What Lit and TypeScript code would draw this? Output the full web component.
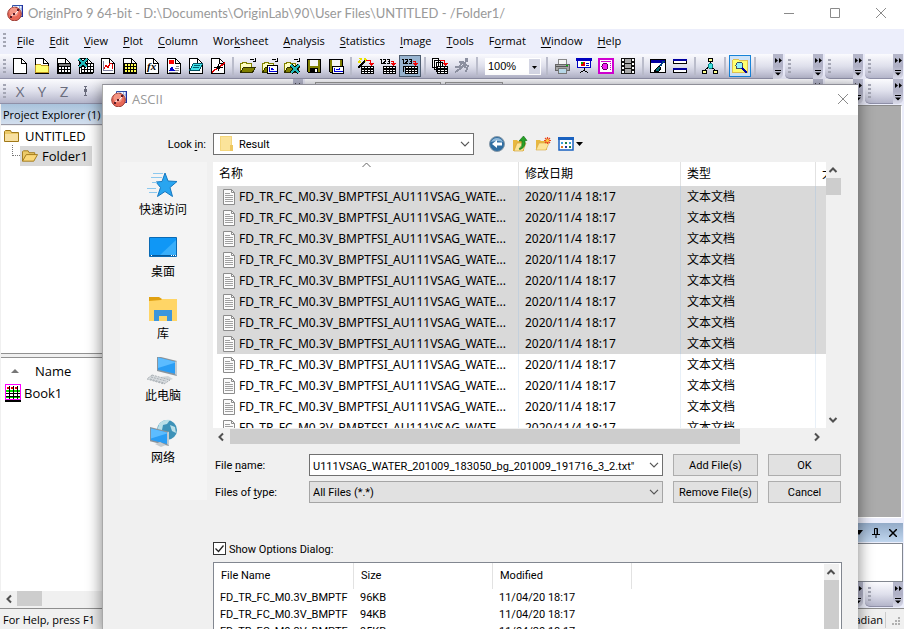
import { LitElement, html, svg, css } from "lit";
import { customElement, query } from "lit/decorators.js";
import { classMap } from "lit/directives/class-map.js";

const page = svg`<path d="M1.5.5h8l5 5v10h-13z" fill="#fff" stroke="#000"/><path d="M9.5.5v5h5" fill="none" stroke="#000"/>`;
const grid = (x: number, y: number, fill: string) => svg`
  <rect x=${x + 0.5} y=${y + 0.5} width="12" height="9" fill=${fill} stroke="#000"/>
  <path d="M${x + 3.5} ${y}v10M${x + 6.5} ${y}v10M${x + 9.5} ${y}v10M${x} ${y + 3.5}h13M${x} ${y + 6.5}h13" stroke="#000" fill="none"/>`;
const folder = svg`
  <path d="M.5 14.500V5.500h1.500l1-1h3l1 1h4v3" fill="#ffffc0" stroke="#808000"/>
  <path d="M.5 14.500l3-5h12l-3 5z" fill="#808000" stroke="#303000"/>
  <path d="M9.500 2.500c1-2 4-2 5 0M15.500 0v3.500h-3" fill="none" stroke="#000"/>`;
const floppy = svg`<path d="M1.500 1.500h13v13h-12l-1-1z" fill="#808000" stroke="#000"/><rect x="4" y="2" width="8" height="6" fill="#f4f4f4"/><path d="M4 10h8v5H4z" fill="#000"/><path d="M9 11h2v3H9z" fill="#fff"/>`;
const smallGrid = (x: number, y: number) => svg`
  <path d="M${x} ${y}h13v8h-13z" fill="#000"/>
  ${[0, 1, 2].map((r) => [0, 1, 2, 3].map((c) => svg`<path d="M${x + 1 + c * 3} ${y + 1 + r * 2 + (r ? 1 : 0)}h2v1h-2z" fill="#fff"/>`))}`;
const redArrow = svg`<path d="M10 5h6l-3 3z" fill="#f00000"/><path d="M8 2.500h4.500v3" stroke="#f00000" stroke-width="1.500" fill="none"/>`;
const excelX = (x: number, y: number) => svg`<path d="M${x + 1} ${y + 1}l8 8M${x + 9} ${y + 1}l-8 8" stroke="#000" stroke-width="4"/><path d="M${x + 1} ${y + 1}l8 8M${x + 9} ${y + 1}l-8 8" stroke="#20b8b8" stroke-width="2"/>`;
const digits = svg`<path d="M0 1.500h1.500v4M3 1.500h2.500v1.500l-2 2h2.500M7 1.500h2.500v4H7M7.500 3.500h2" stroke="#000" fill="none"/>`;

const icons: Record<string, unknown> = {
  "New Project": page,
  "New Folder": svg`${page}<path d="M1.500 14.500v-7l1-1h4l1 1h6l1 1v6z" fill="#ffff70" stroke="#c09820"/>`,
  "New Workbook": svg`${page}${grid(2, 5, "#fff")}<path d="M3 6h11v2H3z" fill="#808080"/>`,
  "New Excel": svg`${page}${grid(3, 5, "#fff")}${excelX(0, 0)}`,
  "New Graph": svg`${page}<path d="M3.500 3v9.500H13" stroke="#8080a0" fill="none"/><path d="M4 11l2-4 2 3 2-5 2 1v5" stroke="#e00000" fill="none"/>`,
  "New Matrix": svg`${page}${grid(2, 5, "#ffff50")}`,
  "New Function": svg`${page}<text x="3" y="12" class="fx">fx</text>`,
  "New Layout": svg`${page}<path d="M3 2h5v4H3z" fill="#f00"/><path d="M3 13l2-4 1-1 3 5z" fill="#0000d0"/><path d="M10 8h3M9 10h4M9 12.500h4M3 14h9" stroke="#888"/>`,
  "New Notes": svg`${page}<path d="M5.500 5.500h9l-3 7h-10z" fill="#40e0e8" stroke="#005060"/><path d="M6 7.500h6M5 9.500h6" stroke="#006070"/>`,
  "New 2D Plot": svg`${page}<path d="M8.500 6v7M4 9.500h9" stroke="#000"/><path d="M2 14L15 5" stroke="#e00000" stroke-width="1.500"/><path d="M7 8h3v3H7z" fill="#000"/>`,
  "Open": folder,
  "Open Template": svg`${folder}<path d="M5.500 7.500h10v8h-10z" fill="#fff" stroke="#000"/><path d="M7.500 9v4.500h7M9 12l1-2 1 2 1-1" stroke="#0000e0" fill="none"/>`,
  "Open Excel": svg`${folder}${excelX(6, 6)}`,
  "Save Project": floppy,
  "Save Template": svg`${floppy}<path d="M4.500 8.500h11v7h-11z" fill="#fff" stroke="#000"/><path d="M6.500 10v3.500h8M8 12l1-1 2 1 1-2" stroke="#0000e0" fill="none"/>`,
  "Import Wizard": svg`<path d="M0 10l7-7" stroke="#000" stroke-width="2"/><path d="M2 0l2 2M7 0v2M0 4l2-1M3 5l-1-1M9 2l-2 1" stroke="#e8e000" stroke-width="1.500"/>${redArrow}${smallGrid(3, 8)}`,
  "Import Single ASCII": svg`${digits}<path d="M11 3.500h2.500v2" stroke="#f00000" fill="none"/><path d="M11 5h5l-2.500 3z" fill="#f00000"/>${smallGrid(3, 8)}`,
  "Import Multiple ASCII": svg`${digits}<path d="M11 3.500h2.500v2" stroke="#f00000" fill="none"/><path d="M11 5h5l-2.500 3z" fill="#f00000"/><path d="M1.500 14v-5.500h2" stroke="#000" fill="none"/>${smallGrid(3, 8)}`,
  "Batch Processing": svg`<path d="M.5.500h6v9h-6zM2.500 2.500h6v9h-6zM4.500 4.500h6v9h-6z" fill="#fff" stroke="#000"/>${redArrow}<path d="M5 8h11v8H5z" fill="#000"/><path d="M6 9h2v1H6zM9 9h3v1H9zM13 9h2v1h-2zM6 12h2v1H6zM9 12h3v1H9zM13 12h2v1h-2zM6 14h2v1H6zM9 14h3v1H9zM13 14h2v1h-2z" fill="#fff"/>`,
  "Recalculate": svg`<g stroke="#8c90a0" fill="none" stroke-width="2"><path d="M12 3l-3 5-3 3-5 3M9 8l4 2-1 4M5 4h4l2 3 4 1M8 5L5 9H1"/></g><circle cx="12.500" cy="2" r="2" fill="#8c90a0"/>`,
  "Print": svg`<path d="M4 6l1-5h7v5" fill="#f4f4f4" stroke="#888"/><path d="M1 6h14v6H1z" fill="#a4a4a4" stroke="#666"/><path d="M2 8h12" stroke="#555"/><path d="M4 10h8v5H4z" fill="#b8d8e8" stroke="#777"/><path d="M12 7h2v1h-2z" fill="#00c000"/>`,
  "Slide Show": svg`<path d="M0 0h16v2.500H0z" fill="#0000c0"/><path d="M1.500 2.500h13v7h-13z" fill="#fff" stroke="#0000c0"/><circle cx="7" cy="6" r="2.500" fill="#e00000"/><path d="M7 6v-2.500a2.500 2.500 0 0 0-2.500 3z" fill="#00a000"/><path d="M10 5h3M10 7h3" stroke="#0000c0"/><path d="M8 10v3M4 14.500l4-2 4 2" stroke="#000" fill="none"/>`,
  "Copy Page": svg`<path d="M1 1h14v14H1z" fill="#fff" stroke="#d000d0" stroke-width="2"/><path d="M3 3.500h10" stroke="#d000d0"/><circle cx="7" cy="8.500" r="3" fill="#f020f0" stroke="#600060"/><path d="M12.500 5v7" stroke="#c000c0" stroke-dasharray="1 1"/>`,
  "Video": svg`<path d="M1 0h14v16H1z" fill="#111"/><path d="M5 1h6v4H5zM5 6h6v4H5zM5 11h6v4H5z" fill="#a8a8a8"/><path d="M3 1v15M13 1v15" stroke="#fff" stroke-width="2" stroke-dasharray="2 2"/>`,
  "Format": svg`<path d="M.5 1.500h15v13H.5z" fill="#fff" stroke="#000"/><path d="M1 2h14v3H1z" fill="#0000a0"/><path d="M14 3l-4 5" stroke="#004080" stroke-width="2"/><path d="M9 8l2 2-2 3-5 1 2-3z" fill="#006c70" stroke="#000"/>`,
  "Duplicate": svg`<path d="M1.500 1.500h13v4h-13zM1.500 10.500h13v4h-13z" fill="#fff" stroke="#000"/><path d="M1 1h14v2H1zM1 10h14v2H1z" fill="#0000a0"/>`,
  "Add Columns": svg`<path d="M8.500 3v5M3 12l5-4 5 4" stroke="#000" fill="none"/><path d="M6.500.500h4v3h-4zM.5 12.500h4v3h-4zM11.500 12.500h4v3h-4z" fill="#ffff90" stroke="#000"/><circle cx="8.500" cy="8" r="2.500" fill="#40e0e0" stroke="#008080"/>`,
  "Project Explorer": svg`<path d="M.5 14.500V2.500l1-1h5l1 1h8v12z" fill="#ffff70" stroke="#e0c050"/><circle cx="7.500" cy="7.500" r="3.500" fill="#90f0ff" stroke="#405060"/><path d="M10 10l5 5" stroke="#0000a0" stroke-width="2.500"/>`,
};

const groups: string[][] = [
  ["New Project", "New Folder", "New Workbook", "New Excel", "New Graph", "New Matrix", "New Function", "New Layout", "New Notes", "New 2D Plot"],
  ["Open", "Open Template", "Open Excel", "Save Project", "Save Template"],
  ["Import Wizard", "Import Single ASCII", "Import Multiple ASCII"],
  ["Batch Processing", "Recalculate"],
];
const groupsAfterZoom: string[][] = [
  ["Print", "Slide Show", "Copy Page", "Video"],
  ["Format", "Duplicate"],
  ["Add Columns"],
  ["Project Explorer"],
];

const menus = ["_File", "_Edit", "_View", "_Plot", "_Column", "Wor_ksheet", "_Analysis", "_Statistics", "_Image", "_Tools", "F_ormat", "_Window", "_Help"];

const mnemonic = (label: string) => {
  const at = label.indexOf("_");
  return html`${label.slice(0, at)}<u>${label[at + 1]}</u>${label.slice(at + 2)}`;
};

const appIcon = svg`<path d="M5.500.500h10v11h-10z" fill="#eef4ff" stroke="#3050a8"/><path d="M9 1v10M12.500 1v10M6 4h10M6 8h10" stroke="#9ab0e0"/><path d="M15.500 0v12" stroke="#2030a0" stroke-width="1.500"/><circle cx="7.500" cy="9" r="6.800" fill="#e86858" stroke="#9c3c34"/><circle cx="7" cy="7" r="4.500" fill="#f8a898" opacity=".7"/><path d="M3.500 12l3-3h2l3-4" stroke="#fff" fill="none"/><path d="M3 11h2v2H3zM6 8h2v2H6zM10 4h2v2h-2z" fill="#5a1c28"/>`;

const chevron = html`<svg class="chevron" viewBox="0 0 10 6" width="10" height="6"><path d="M1 .8l4 4 4-4" fill="none" stroke="#555" stroke-width="1.200"/></svg>`;
const arrow = (rotation: string) => html`<svg class="arrow ${rotation}" viewBox="0 0 10 10" width="10" height="10"><path d="M1.500 7L5 3.500 8.500 7" fill="none" stroke="#505050" stroke-width="2"/></svg>`;
const closeX = html`<svg viewBox="0 0 12 12" width="12" height="12"><path d="M1 1l10 10M11 1L1 11" stroke="#8a8a8a" fill="none"/></svg>`;

const monitor = svg`<path d="M0 0l20 5v15L0 15z" fill="#8a949c"/><path d="M1 1.500l17 4.300v12L1 13.700z" fill="#2a9df4"/><path d="M1 1.500l17 4.300v1L1 12z" fill="#5cbcff"/><path d="M18 5.800l2-.8v15l-2-2z" fill="#c4ccd2"/>`;
const places = [
  { label: "快速访问", art: svg`<path d="M18 2l3 8 9 .5-7 6 2.500 9-7.500-5-7.500 5 3-9-4.500-5.500 6-.5z" fill="#29a5f0" stroke="#1678c0"/><path d="M6 2.500h10M4 6.500h11M0 17.500h9M2 21.500h8M5 11.500h5" stroke="#8cc8ee" fill="none"/>` },
  { label: "桌面", art: svg`<path d="M2.500 4.500h27v19h-27z" fill="#0f97f6" stroke="#0a6ab4"/><path d="M12 23L29 7v16z" fill="#38aefa"/><path d="M3 22.500h26" stroke="#075898"/><path d="M4 22.500h1M24 22.500h1M26 22.500h1M28 22.500h1" stroke="#fff"/>` },
  { label: "库", art: svg`<path d="M2 2h10l3 2v4H2z" fill="#e0a010"/><path d="M2 6l12-1 1-1h15v22H2z" fill="#ffd566"/><path d="M7 26V15h18v11h-5v-5h-8v5z" fill="#3d96dc"/>` },
  { label: "此电脑", art: svg`<g transform="translate(10 -1)">${monitor}</g><path d="M13 20l8-1 5 3-9 3z" fill="#d0d5d8"/><path d="M5 18l18 5-6 4-17-5z" fill="#d8dcdf" stroke="#aab0b4" stroke-dasharray="2 1"/><path d="M4 20l15 4M3 22l14 4" stroke="#a8afb4" stroke-dasharray="2 1"/>` },
  { label: "网络", art: svg`<circle cx="20" cy="11" r="10" fill="#3d92b8"/><path d="M12 5q5-5 11-4l-3 4-4 1-1 5-5 1zM23 6l5 2 1 6-4-2z" fill="#b9dfe8"/><g transform="translate(3 8) scale(.95)">${monitor}</g><path d="M8 25l5-2 6 3-5 2z" fill="#c5cbcf"/>` },
];

const fileRows = Array.from({ length: 12 }, (_, i) => ({
  name: "FD_TR_FC_M0.3V_BMPTFSI_AU111VSAG_WATE...",
  date: "2020/11/4 18:17",
  type: "文本文档",
  selected: i < 8,
}));
const chosen = ["96KB", "94KB", "95KB"].map((size) => ({ name: "FD_TR_FC_M0.3V_BMPTF", size, modified: "11/04/20 18:17" }));

@customElement("app-root")
export class AppRoot extends LitElement {
  @query(".file-name") private fileName!: HTMLInputElement;

  static styles = css`
    :host {
      display: flex; flex-direction: column; position: relative; height: 100vh; overflow: hidden;
      font: 11px/16px "Open Sans", "Noto Sans CJK SC", sans-serif; color: #000; background: #eceefb;
    }
    * { box-sizing: border-box; }
    button, input, select { font: inherit; color: inherit; margin: 0; border-radius: 0; }
    button { padding: 0; border: 0; background: none; }
    svg { display: block; flex: none; }
    .fx { font: italic 700 11px "Liberation Serif", serif; }

    .titlebar { display: flex; align-items: center; height: 29px; flex: none; padding: 0 8px 3px 7px; gap: 5px; background: #fff; color: #999; }
    .titlebar h1, .dialog-title h2 { flex: 1; margin: 0; font-weight: 400; white-space: nowrap; }
    .titlebar h1 { font: 13px/20px Lato, sans-serif; }
    .window-buttons { display: flex; }
    .window-buttons button { width: 46px; height: 24px; display: grid; place-items: center; }
    .window-buttons button:last-child { width: 30px; margin-left: 8px; }

    .menubar { display: flex; align-items: center; height: 25px; flex: none; padding: 0 0 2px 3px; background: #eceefb; }
    .menubar nav { display: flex; margin-left: 11px; gap: 15px; }
    .menubar a { color: #000; text-decoration: none; }
    u { text-underline-offset: 2px; }
    .grip { width: 3px; height: 15px; flex: none; background: repeating-linear-gradient(#a4a6b4 0 2px, transparent 2px 4px); }

    .toolrow { display: flex; height: 25px; flex: none; gap: 2px; padding-right: 1px; background: #e8e9f8; }
    .band { display: flex; height: 25px; min-width: 0; }
    .band.main { flex: 1; }
    .band.small { width: 38px; flex: none; }
    .band.columns { width: 303px; flex: none; }
    .tools { display: flex; align-items: center; flex: 1; min-width: 0; padding-left: 3px; background: linear-gradient(#fbfbfe, #dfe0ec 50%, #b4b5ca); border-bottom: 1px solid #8f90a8; overflow: hidden; }
    .small .tools { border-radius: 0 0 0 5px; }
    .more { display: flex; flex-direction: column; align-items: center; justify-content: space-around; width: 10px; flex: none; background: linear-gradient(#b4b6ca, #b0b1c6 50%, #d8d9e8); border-radius: 0 0 5px 0; }
    .group { display: flex; }
    .first { margin-left: 3px; }
    .tool { width: 22px; height: 22px; display: grid; place-items: center; border: 1px solid transparent; }
    .tool.on { background: #98b4d0; border-color: #4d5c70; }
    .tool.hot { background: #cfe4f8; border-color: #1883d7; }
    .sep { width: 2px; height: 18px; margin: 0 3px; background: #babccb; flex: none; }
    .zoom { position: relative; display: flex; width: 56px; height: 17px; margin: 0 2px 0 4px; }
    .zoom select { width: 56px; height: 17px; padding: 0 0 0 3px; border: 0; appearance: none; background: #fff; font: 11px/16px "Liberation Sans", sans-serif; }
    .zoom svg { position: absolute; right: 0; top: 0; pointer-events: none; }
    .letters { margin-left: 3px; color: #6a6c7c; font-size: 15px; }
    .letters .tool { line-height: 20px; }
    .toolcombo { align-self: flex-start; height: 20px; margin: 3px 0 0 4px; border: 1px solid #999; background: #e4e4ec; flex: none; }
    .toolcombo.wide { width: 126px; }
    .toolcombo.narrow { width: 58px; }

    .workspace { display: flex; flex: 1; min-height: 0; }
    .explorer { display: flex; flex-direction: column; width: 140px; flex: none; background: #f0f0f0; padding-left: 1px; }
    .explorer h2 { height: 21px; flex: none; margin: 0; padding: 0 2px; font: inherit; line-height: 22px; background: linear-gradient(#a9c3dc, #d3dfee); border-bottom: 1px solid #9a9aa6; white-space: nowrap; }
    .tree { height: 227px; flex: none; margin: 1px 0 0; padding: 0 0 0 3px; list-style: none; background: #fff; font-size: 13px; }
    .tree li { display: flex; align-items: center; height: 20px; gap: 5px; }
    .node { display: flex; align-items: center; height: 20px; gap: 4px; padding: 0 4px 0 2px; background: #d9d9d9; }
    .twig { width: 12px; height: 11px; margin: -11px -9px 0 8px; border: 1px dotted #777; border-width: 0 0 1px 1px; flex: none; }
    .splitter { height: 5px; flex: none; border: 1px solid #929292; border-width: 1px 0; background: #f0f0f0; }
    .books { flex: 1; min-height: 0; background: #fff; font-size: 13px; }
    .books-head { display: flex; align-items: center; height: 25px; padding-left: 10px; gap: 16px; }
    .book { display: flex; align-items: center; height: 20px; padding-left: 4px; gap: 3px; }
    .hscroll, .vscroll { display: flex; align-items: center; background: #f0f0f0; flex: none; }
    .hscroll { height: 15px; }
    .vscroll { flex-direction: column; width: 15px; }
    .thumb { background: #cdcdcd; }
    .hscroll .thumb { height: 15px; }
    .vscroll .thumb { width: 15px; }
    .explorer .hscroll { margin-bottom: 2px; }
    .explorer .thumb { width: 25px; margin-left: -1px; }
    .arrow { margin: 3px 4px 3px 3px; }
    .left { transform: rotate(-90deg); } .right { transform: rotate(90deg); } .down { transform: rotate(180deg); }

    .main-area { display: flex; flex-direction: column; flex: 1; min-width: 0; padding-right: 1px; }
    .mdi { flex: 1; background: #ababab; border: 1px solid #8a8a8a; border-right: 1px solid #fff; border-bottom: 1px solid #fff; margin: 1px 1px 5px 0; }
    .dock-title { display: flex; align-items: center; justify-content: flex-end; gap: 9px; height: 19px; flex: none; padding-right: 6px; background: linear-gradient(#93abc8, #c0d6ee); }
    .dock-body { height: 39px; flex: none; margin: 1px 0 0; border: 1px solid #828790; background: #fff; }
    .dock-tools { display: flex; justify-content: flex-end; gap: 2px; height: 26px; }
    .status { display: flex; align-items: center; height: 21px; flex: none; padding: 2px 3px 0; background: #f0f0f0; border-top: 1px solid #8e8e8e; white-space: nowrap; }
    .status .mode { margin-left: auto; padding-right: 2px; border-right: 1px solid #ccc; }
    .status svg { margin: 3px 0 0 6px; }

    .dialog {
      position: absolute; left: 102px; right: 46px; top: 84px; bottom: 0; display: flex; flex-direction: column;
      background: #f0f0f0; border-top: 1px solid #8f8f98; border-left: 1px solid #a8a8a8; box-shadow: 0 4px 14px 1px rgba(0, 0, 0, 0.45);
      font: 11px/16px Roboto, "Noto Sans CJK SC", sans-serif;
    }
    .dialog-title { display: flex; align-items: center; gap: 5px; height: 30px; flex: none; padding: 0 9px 2px 8px; background: #fff; color: #999; font-family: "Open Sans", sans-serif; }
    .dialog-title h2 { font-size: 13px; }
    .look { display: flex; align-items: center; height: 22px; margin: 18px 17px 7px; flex: none; }
    .look label { width: 93px; padding: 2px 7px 0 0; text-align: right; }
    .combo { position: relative; display: flex; }
    .combo select, .combo input { width: 100%; height: 22px; border: 1px solid #707070; background: #fff; appearance: none; outline: 0; padding: 2px 22px 0 3px; }
    .combo .chevron { position: absolute; right: 4px; top: 8px; pointer-events: none; }
    .combo.folder { width: 261px; }
    .combo.folder select { padding-left: 25px; }
    .combo .folder-icon { position: absolute; left: 7px; top: 3px; pointer-events: none; }
    .combo.type select { background: #e1e1e1; border-color: #a5a5a5; }
    .look-tools { display: flex; margin-left: 15px; gap: 7px; }
    .browse { display: flex; padding: 0 17px; gap: 6px; }
    .places { display: flex; flex-direction: column; width: 87px; height: 338px; flex: none; padding-top: 9px; background: #f4f4f4; font-size: 12px; }
    .places button { display: flex; flex-direction: column; align-items: center; height: 62px; gap: 2px; padding-right: 1px; line-height: 18px; }
    .pane { flex: 1; min-width: 0; }
    .files { display: flex; height: 266px; }
    .clip { flex: 1; min-width: 0; overflow: hidden; background: #fff; font: 12px/16px "Noto Sans", "Noto Sans CJK SC", sans-serif; position: relative; }
    .sort { position: absolute; left: 149px; top: -1px; }
    table { border-collapse: separate; border-spacing: 0; table-layout: fixed; }
    th, td { padding: 0; font-weight: 400; text-align: left; white-space: nowrap; overflow: hidden; }
    .clip table { width: calc(100% + 20px); }
    .clip th { height: 24px; padding-left: 6px; border-left: 1px solid #e2e2e2; }
    .clip td { height: 21px; padding-left: 6px; border-left: 1px solid #e8f0f8; }
    .clip th:first-child, .clip td:first-child { border-left: 0; }
    .clip td:first-child { border-left: 4px solid #fff; padding-left: 5px; }
    .clip .sel td { background: #d9d9d9; border-left-color: #c4d0dc; }
    .clip .sel td:first-child { border-left-color: #fff; }
    .c-name { width: 305px; } .c-date { width: 162px; } .c-type { width: 135px; }
    .cell { display: flex; align-items: center; gap: 3px; }
    .files .vscroll .thumb { height: 17px; margin-bottom: auto; }
    .pane .hscroll { margin-right: 15px; margin-top: 1px; }
    .pane .hscroll .thumb { width: 510px; margin: 0 auto 0 0; }
    .form { display: grid; grid-template-columns: 86px minmax(0, 1fr) 85px 73px; align-items: center; column-gap: 10px; row-gap: 5px; margin-top: 10px; }
    .form label { padding: 2px 0 0 2px; white-space: nowrap; }
    .push { height: 22px; padding-top: 2px; border: 1px solid #adadad; background: #e1e1e1; text-align: center; }
    .options { display: flex; align-items: center; gap: 3px; height: 16px; margin: 37px 0 6px 110px; flex: none; }
    .options label { padding-top: 3px; }
    .options input { appearance: none; width: 13px; height: 13px; border: 1px solid #333; background: #fff; }
    .check { position: relative; display: flex; }
    .check svg { position: absolute; left: 1px; top: 1px; pointer-events: none; }
    .chosen { display: flex; flex: 1; min-height: 0; margin: 0 16px 0 110px; border: 1px solid #828790; border-bottom: 0; background: #fff; overflow: hidden; }
    .chosen .clip2 { flex: 1; min-width: 0; overflow: hidden; }
    .chosen table { width: 100%; }
    .chosen th { height: 26px; padding-left: 7px; border-right: 1px solid #e2e2e2; }
    .chosen th:last-child { border-right: 0; }
    .chosen td { height: 17px; padding-left: 6px; }
    .chosen .vscroll { margin: 1px 2px 0 0; }
    .chosen .vscroll .thumb { flex: 1; }
    .c-139 { width: 139px; } .c-140 { width: 140px; }
  `;

  firstUpdated() {
    this.fileName.scrollLeft = this.fileName.scrollWidth;
  }

  private tool(name: string) {
    return html`<button class=${classMap({ tool: true, on: name === "Import Multiple ASCII", hot: name === "Project Explorer" })} title=${name} aria-label=${name}>
      <svg viewBox="0 0 16 16" width="16" height="16" shape-rendering="crispEdges">${icons[name]}</svg>
    </button>`;
  }

  private more() {
    return html`<button class="more" aria-label="More buttons">
      <svg viewBox="0 0 8 5" width="8" height="5"><path d="M1 0l3 2.500-3 2.500zM5 0l3 2.500-3 2.500z"/></svg>
      <svg viewBox="0 0 8 6" width="8" height="6"><path d="M1 0h6v1H1zM1 2.500h6l-3 3z"/></svg>
    </button>`;
  }

  private smallBand() {
    return html`<div class="band small"><div class="tools"><span class="grip"></span></div>${this.more()}</div>`;
  }

  render() {
    return html`
      <header class="titlebar">
        <svg viewBox="0 0 16 16" width="16" height="16">${appIcon}</svg>
        <h1>OriginPro 9 64-bit - D:\\Documents\\OriginLab\\90\\User Files\\UNTITLED - /Folder1/</h1>
        <div class="window-buttons">
          <button aria-label="Minimize"><svg viewBox="0 0 12 12" width="12" height="12"><path d="M1 6.500h10" stroke="#8a8a8a"/></svg></button>
          <button aria-label="Maximize"><svg viewBox="0 0 12 12" width="12" height="12"><path d="M1.500 1.500h9v9h-9z" fill="none" stroke="#8a8a8a"/></svg></button>
          <button aria-label="Close">${closeX}</button>
        </div>
      </header>
      <div class="menubar"><span class="grip"></span><nav>${menus.map((m) => html`<a href="#">${mnemonic(m)}</a>`)}</nav></div>
      <div class="toolrow">
        <div class="band main">
          <div class="tools">
            <span class="grip"></span>
            ${groups.map((g, i) => html`<div class=${classMap({ group: true, first: i === 0 })}>${g.map((n) => this.tool(n))}</div><span class="sep"></span>`)}
            <div class="zoom">
              <select aria-label="Zoom"><option>100%</option></select>
              <svg viewBox="0 0 13 17" width="13" height="17"><path d="M1 1h11v15H1z" fill="#d4d6e4"/><path d="M4 8h5l-2.500 3z"/></svg>
            </div>
            ${groupsAfterZoom.map((g) => html`<span class="sep"></span><div class="group">${g.map((n) => this.tool(n))}</div>`)}
            <span class="sep"></span>
          </div>
          ${this.more()}
        </div>
        ${this.smallBand()}${this.smallBand()}${this.smallBand()}
      </div>
      <div class="toolrow">
        <div class="band columns">
          <div class="tools">
            <span class="grip"></span>
            <div class="group letters">
              <button class="tool">X</button><button class="tool">Y</button><button class="tool">Z</button>
              <button class="tool" aria-label="Error bar"><svg viewBox="0 0 16 16" width="16" height="16"><path d="M6 3.500h3M7.500 3v10M6 12.500h3" stroke="#6a6c7c"/><path d="M6 6h3v3H6z" fill="#6a6c7c"/></svg></button>
            </div>
          </div>
          ${this.more()}
        </div>
        <div class="band main">
          <div class="tools"><span class="grip"></span><span class="toolcombo wide"></span><span class="toolcombo narrow"></span></div>
          ${this.more()}
        </div>
        ${this.smallBand()}${this.smallBand()}
      </div>
      <div class="workspace">
        <aside class="explorer">
          <h2>Project Explorer (1)</h2>
          <ul class="tree">
            <li><svg viewBox="0 0 16 14" width="16" height="14"><path d="M.5 12.500v-10l1-1h5l1 2h7v9z" fill="#ecca68" stroke="#a07818"/><path d="M1 5h13v7H1z" fill="#f8e0a0"/></svg>UNTITLED</li>
            <li><span class="twig"></span><span class="node"><svg viewBox="0 0 17 14" width="16" height="14"><path d="M.5 12.500v-10l1-1h5l1 2h6v3" fill="#ecca68" stroke="#a07818"/><path d="M.5 12.500l4-7h12l-4 7z" fill="#fbd878" stroke="#a07818"/></svg>Folder1</span></li>
          </ul>
          <div class="splitter"></div>
          <div class="books">
            <div class="books-head"><svg viewBox="0 0 8 4" width="8" height="4"><path d="M0 4l4-4 4 4z" fill="#777"/></svg>Name</div>
            <div class="book"><svg viewBox="0 0 16 18" width="16" height="18" shape-rendering="crispEdges"><path d="M.5.500h15v15H.5z" fill="#fff"/><path d="M1 7h14M1 13h14" stroke="#00e000" stroke-width="2"/><path d="M4.500 2v13M8.500 2v13M12.500 2v13M1 9.500h14M1 12.500h14" stroke="#000"/><path d="M2 4h12" stroke="#e00000" stroke-width="2" stroke-dasharray="2 2"/><path d="M.5.500h15v15H.5z" fill="none" stroke="#f0f"/><path d="M0 17h16" stroke="#000" stroke-width="2"/></svg>Book1</div>
          </div>
          <div class="hscroll">${arrow("left")}<div class="thumb"></div></div>
        </aside>
        <main class="main-area">
          <div class="mdi"></div>
          <div class="dock-title">
            <svg viewBox="0 0 8 5" width="8" height="5"><path d="M0 0h8l-4 5z"/></svg>
            <svg viewBox="0 0 8 10" width="8" height="10"><path d="M2.500 6V.500h3V6M0 6.500h8M4 7v3M5 1v5" stroke="#000" fill="none"/></svg>
            <svg viewBox="0 0 8 8" width="8" height="8"><path d="M0 0l8 8M8 0L0 8" stroke="#000" stroke-width="1.500"/></svg>
          </div>
          <div class="dock-body"></div>
          <div class="dock-tools">${this.smallBand()}${this.smallBand()}</div>
        </main>
      </div>
      <footer class="status">
        <span>For Help, press F1</span><span class="mode">Radian</span>
        <svg viewBox="0 0 9 9" width="9" height="9"><path d="M6 0h2v2H6zM3 3h2v2H3zM6 3h2v2H6zM0 6h2v2H0zM3 6h2v2H3zM6 6h2v2H6z" fill="#b0b0b0"/></svg>
      </footer>

      <section class="dialog" role="dialog" aria-label="ASCII">
        <div class="dialog-title">
          <svg viewBox="0 0 16 16" width="16" height="16">${appIcon}</svg>
          <h2>ASCII</h2>
          <button aria-label="Close dialog">${closeX}</button>
        </div>
        <div class="look">
          <label for="look">Look <u>i</u>n:</label>
          <div class="combo folder">
            <select id="look"><option>Result</option></select>
            <svg class="folder-icon" viewBox="0 0 14 16" width="14" height="16"><path d="M0 0h12v12l1 3H0z" fill="#f4d67c"/><path d="M1 1h10v13H1z" fill="#fbe39a"/><path d="M10 9h3v6h-3z" fill="#eec760"/></svg>
            ${chevron}
          </div>
          <div class="look-tools">
            <button aria-label="Back"><svg viewBox="0 0 16 16" width="16" height="16"><circle cx="8" cy="8" r="7.500" fill="#2f6da0" stroke="#8799a8"/><path d="M2 6a6.500 6.500 0 0 1 12 0q-6-2-12 0z" fill="#90b8d8"/><path d="M3 8l5-4v2.500h5v3H8V12z" fill="#fff"/></svg></button>
            <button aria-label="Up one level"><svg viewBox="0 0 16 16" width="16" height="16"><path d="M1 4h4l1 1h6v10H1z" fill="#e8b840"/><path d="M2 15l3-8h9l-3 8z" fill="#fce498" stroke="#cf9c30" stroke-width=".6"/><path d="M7 13q4-3 3-8H7l4.500-5L15 4.500h-2q1 7-5 9z" fill="#28a028" stroke="#0c6810" stroke-width=".6"/></svg></button>
            <button aria-label="New folder"><svg viewBox="0 0 16 16" width="16" height="16"><path d="M1 4h4l1 1h6v9H1z" fill="#e8b840"/><path d="M1 14l3-7h10l-3 7z" fill="#fce498" stroke="#d8a840" stroke-width=".6"/><path d="M12.500 1v7M9 4.500h7M10 2l5 5M15 2l-5 5" stroke="#e84820" stroke-width="1.200"/><circle cx="12.500" cy="4.500" r="1.500" fill="#ffd040"/></svg></button>
            <button aria-label="View menu"><svg viewBox="0 0 26 16" width="26" height="16"><path d="M1 2h14v12H1z" fill="#fff" stroke="#1a62c0" stroke-width="1.500"/><path d="M0 1h16v3H0z" fill="#1a62c0"/><path d="M3 6h2v2H3zM11 6h2v2h-2z" fill="#38a0d8"/><path d="M7 6h2v2H7zM11 10h2v2h-2z" fill="#228040"/><path d="M3 10h2v2H3z" fill="#e07820"/><path d="M7 10h2v2H7z" fill="#203898"/><path d="M18 6h7l-3.500 4z"/></svg></button>
          </div>
        </div>
        <div class="browse">
          <nav class="places">
            ${places.map((p) => html`<button><svg viewBox="0 0 32 28" width="32" height="28">${p.art}</svg>${p.label}</button>`)}
          </nav>
          <div class="pane">
            <div class="files">
              <div class="clip">
                <svg class="sort" viewBox="0 0 9 8" width="9" height="8"><path d="M.5 6l4-4 4 4" fill="none" stroke="#666"/></svg>
                <table>
                  <thead><tr><th class="c-name">名称</th><th class="c-date">修改日期</th><th class="c-type">类型</th><th>大小</th></tr></thead>
                  <tbody>
                    ${fileRows.map((f) => html`<tr class=${classMap({ sel: f.selected })}>
                      <td><span class="cell"><svg viewBox="0 0 14 16" width="14" height="16"><path d="M1.500.500h8l3 3v12h-11z" fill="#fbfbfb" stroke="#8c8c8c"/><path d="M9.500.500v3h3" fill="none" stroke="#8c8c8c"/><path d="M3 4.500h5M3 6.500h8M3 8.500h8M3 10.500h8M3 12.500h8" stroke="#a0a0a0"/></svg>${f.name}</span></td>
                      <td>${f.date}</td><td>${f.type}</td><td></td>
                    </tr>`)}
                  </tbody>
                </table>
              </div>
              <div class="vscroll">${arrow("up")}<div class="thumb"></div>${arrow("down")}</div>
            </div>
            <div class="hscroll">${arrow("left")}<div class="thumb"></div>${arrow("right")}</div>
            <div class="form">
              <label for="fname">File <u>n</u>ame:</label>
              <div class="combo"><input id="fname" class="file-name" .value=${'U111VSAG_WATER_201009_183050_bg_201009_191716_3_2.txt"'} />${chevron}</div>
              <button class="push">Add File(s)</button><button class="push">OK</button>
              <label for="ftype">Files of <u>t</u>ype:</label>
              <div class="combo type"><select id="ftype"><option>All Files (*.*)</option></select>${chevron}</div>
              <button class="push">Remove File(s)</button><button class="push">Cancel</button>
            </div>
          </div>
        </div>
        <div class="options">
          <span class="check"><input id="opts" type="checkbox" checked /><svg viewBox="0 0 11 11" width="11" height="11"><path d="M1.500 5.500l3 3 5-6" fill="none" stroke="#222" stroke-width="1.300"/></svg></span>
          <label for="opts">Show Options Dialog:</label>
        </div>
        <div class="chosen">
          <div class="clip2">
            <table>
              <thead><tr><th class="c-140">File Name</th><th class="c-139">Size</th><th class="c-139">Modified</th><th></th></tr></thead>
              <tbody>${chosen.map((c) => html`<tr><td>${c.name}</td><td>${c.size}</td><td>${c.modified}</td><td></td></tr>`)}</tbody>
            </table>
          </div>
          <div class="vscroll">${arrow("up")}<div class="thumb"></div></div>
        </div>
      </section>
    `;
  }
}
